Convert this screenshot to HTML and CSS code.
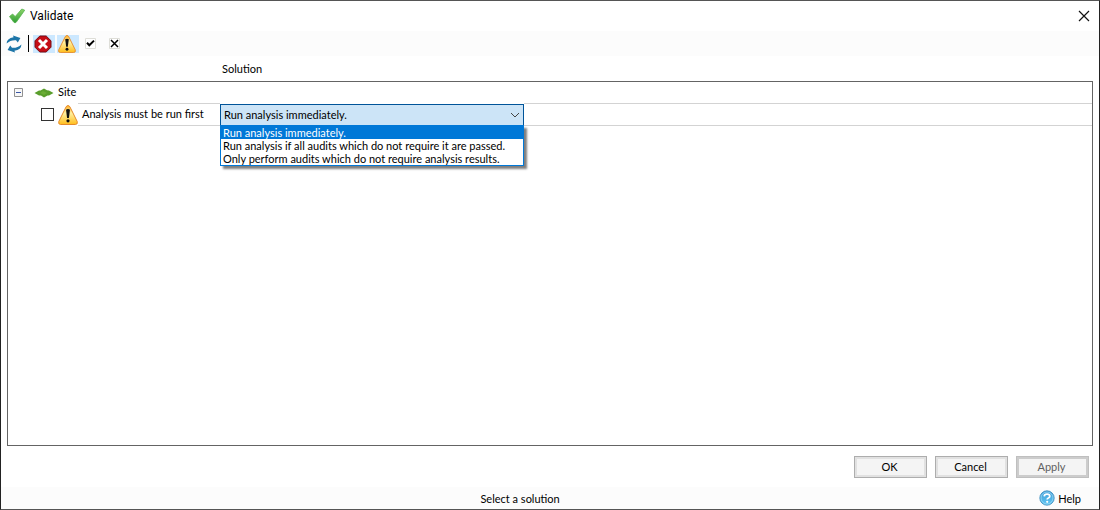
FILE: index.html
```html
<!DOCTYPE html>
<html lang="en">
<head>
<meta charset="utf-8">
<title>Validate</title>
<link rel="stylesheet" href="styles.css">
</head>
<body>
<svg class="defs" aria-hidden="true">
  <defs>
    <linearGradient id="amber" x1="0" y1="0" x2="0" y2="1"><stop offset="0" stop-color="#ffb52e"/><stop offset=".4" stop-color="#fff0a0"/><stop offset="1" stop-color="#ffbd1c"/></linearGradient>
    <linearGradient id="leaf" x1="0" y1="0" x2="0" y2="1"><stop offset="0" stop-color="#8ed46a"/><stop offset="1" stop-color="#2f9e35"/></linearGradient>
    <linearGradient id="sky" x1="0" y1="0" x2="0" y2="1"><stop offset="0" stop-color="#3f9bd6"/><stop offset="1" stop-color="#62c8f4"/></linearGradient>
    <symbol id="warning" viewBox="0 0 20 20">
      <path d="M10 .6 Q11.3 .6 12 2 L19.2 16.5 Q20 19.4 17.4 19.5 H2.6 Q0 19.4 .8 16.5 L8 2 Q8.7 .6 10 .6Z" fill="url(#amber)" stroke="#e58a2c" stroke-width="1"/>
      <path d="M8 4.8 Q10 3.4 12 4.8 L10.9 13 H9.1Z" fill="#111"/><circle cx="10" cy="15.8" r="1.6" fill="#111"/>
    </symbol>
  </defs>
</svg>
<div class="window">
  <header class="titlebar">
    <svg class="logo" viewBox="0 0 16 16"><path d="M.5 8.5 L3.6 6 L6.2 8.6 L12.8 1 L15.7 2.2 L7.4 14 Q6 15.8 4.6 14Z" fill="url(#leaf)" stroke="#58b450" stroke-width=".8"/></svg>
    <h1 class="title">Validate</h1>
    <button class="close" aria-label="Close"><svg viewBox="0 0 12 12"><path d="M1 1 L11 11 M11 1 L1 11" stroke="#111" stroke-width="1.2"/></svg></button>
  </header>
  <div class="toolbar" role="toolbar">
    <button class="refresh" aria-label="Refresh"><svg viewBox="0 0 18 18"><path d="M1.6 8.6 Q1.6 3.4 8.6 2.2 L8 .4 L15.4 3 L12.8 7.4 L11 5.2 Q5.4 4.8 1.6 8.6Z M16.4 9.4 Q16.4 14.6 9.4 15.8 L10 17.6 L2.6 15 L5.2 10.6 L7 12.8 Q12.6 13.2 16.4 9.4Z" fill="#1c75a8"/></svg></button>
    <span class="divider"></span>
    <button class="tool on" aria-label="Show errors" aria-pressed="true"><svg viewBox="0 0 18 18"><path d="M5.8 1 H12.2 L17 5.8 V12.2 L12.2 17 H5.8 L1 12.2 V5.8Z" fill="#c60d16" stroke="#780d10"/><path d="M5 5 L13 13 M13 5 L5 13" stroke="#fff" stroke-width="3"/></svg></button>
    <button class="tool on" aria-label="Show warnings" aria-pressed="true"><svg><use href="#warning"/></svg></button>
    <button class="tool small" aria-label="Check all"><svg viewBox="0 0 11 11"><path d="M.5 .5 H10.5 V10.5 H.5Z" fill="#fff" stroke="#deded8"/><path d="M2 4.7 L4.3 7.2 L9 2.6" fill="none" stroke="#000" stroke-width="2"/></svg></button>
    <button class="tool small" aria-label="Uncheck all"><svg viewBox="0 0 11 11"><path d="M.5 .5 H10.5 V10.5 H.5Z" fill="#fff" stroke="#deded8"/><path d="M2 2 L9 9 M9 2 L2 9" stroke="#000" stroke-width="1.5"/></svg></button>
  </div>
  <div class="columns"><span>Solution</span></div>
  <main class="tree">
    <div class="row group">
      <button class="toggle" aria-label="Collapse Site"><svg viewBox="0 0 9 9"><path d="M.5 .5 H8.5 V8.5 H.5Z" fill="#f7f7f7" stroke="#919191"/><path d="M2 4.5 H7" stroke="#3a57a6"/></svg></button>
      <svg class="site" viewBox="0 0 20 10"><path d="M.5 5 L5 2.4 L6.5 2.4 L10 .4 L13 2.2 L15 2.4 L19.5 5 L15 7.4 L13.5 7.4 L10 9.6 L7 7.6 L5 7.6Z" fill="#5a9e2c"/><path d="M6 5 L9 3 L13 5 L10 7Z" fill="#6bad36"/></svg>
      <span>Site</span>
    </div>
    <div class="row item">
      <input class="check" type="checkbox" id="analysis">
      <svg class="alert"><use href="#warning"/></svg>
      <label class="name" for="analysis">Analysis must be run first</label>
      <div class="combo">
        <select class="field" aria-label="Solution">
          <option>Run analysis immediately.</option>
          <option>Run analysis if all audits which do not require it are passed.</option>
          <option>Only perform audits which do not require analysis results.</option>
        </select>
        <svg class="arrow" viewBox="0 0 10 6"><path d="M1 1 L5 5 L9 1" fill="none" stroke="#444"/></svg>
        <ul class="menu" role="listbox" aria-label="Solution choices">
          <li class="choice current" role="option" aria-selected="true">Run analysis immediately.</li>
          <li class="choice" role="option">Run analysis if all audits which do not require it are passed.</li>
          <li class="choice" role="option">Only perform audits which do not require analysis results.</li>
        </ul>
      </div>
      <span class="rest"></span>
    </div>
  </main>
  <div class="actions">
    <button class="button">OK</button>
    <button class="button">Cancel</button>
    <button class="button" disabled>Apply</button>
  </div>
  <footer class="status">
    <span class="message">Select a solution</span>
    <a class="help" href="#help"><svg viewBox="0 0 16 16"><circle cx="8" cy="8" r="7.2" fill="url(#sky)" stroke="#3689bd" stroke-width=".8"/><circle cx="8" cy="8" r="6" fill="none" stroke="#a4dcf6" stroke-width=".7"/><path d="M5.2 6.4 Q5.4 4.2 8 4.2 Q10.8 4.2 10.8 6.2 Q10.8 7.4 9.4 8 Q8.2 8.5 8.2 9.6" fill="none" stroke="#fff" stroke-width="1.8"/><circle cx="8.2" cy="11.8" r="1.1" fill="#fff"/></svg>Help</a>
  </footer>
</div>
</body>
</html>
```

FILE: styles.css
```css
* { box-sizing: border-box; }
body { margin: 0; color: #000; font: 11px/13px Lato, "Liberation Sans", sans-serif; }
button { margin: 0; padding: 0; border: 0; background: none; color: inherit; font: inherit; }
svg { display: block; flex: none; }
.defs { position: absolute; width: 0; height: 0; }
.window { display: flex; flex-direction: column; min-height: 100vh; border: 1px solid #555; border-left-color: #222; border-right-color: #222; background: #fff; }

.titlebar { display: flex; align-items: center; height: 30px; padding: 0 7px 0 8px; }
.logo { width: 16px; height: 16px; }
.title { flex: 1; margin: 0 0 0 5px; font: 12px/16px Roboto, sans-serif; }
.close { display: grid; place-items: center; width: 16px; height: 16px; }
.close svg { width: 12px; height: 12px; }

.toolbar { display: flex; align-items: center; height: 25px; padding-left: 4px; background: #fcfcfc; }
.tool { display: grid; place-items: center; width: 22px; height: 18px; margin-right: 2px; padding-right: 2px; }
.toolbar svg { width: 18px; height: 18px; }
.tool.on { background: #cce8ff; }
.toolbar .small svg { width: 11px; height: 11px; }
.toolbar .small { padding-right: 3px; }
.refresh { margin-right: 5px; }
.divider { width: 1px; height: 17px; margin-right: 4px; background: #000; }

.columns { height: 25px; padding: 6px 0 0 221px; }
.tree { flex: 1; margin: 0 6px; border: 1px solid #646464; }
.row { display: flex; align-items: center; }
.group { height: 21px; padding-left: 6px; }
.group span { padding-bottom: 2px; }
.toggle { margin-right: 11px; }
.toggle svg { width: 9px; height: 9px; }
.site { width: 20px; height: 10px; margin-right: 4px; }
.item { height: 23px; padding-left: 33px; }
.check { appearance: none; flex: none; width: 13px; height: 13px; margin: 0 4px 0 0; border: 1px solid #333; background: #fff; }
.alert { width: 20px; height: 20px; }
.name, .rest { align-self: stretch; border: solid #d3d3d3; border-width: 1px 0; }
.name { width: 142px; padding: 3px 0 0 4px; white-space: nowrap; }
.rest { flex: 1; }

.combo { position: relative; align-self: flex-end; width: 304px; height: 22px; }
.field { appearance: none; display: block; width: 100%; height: 22px; padding: 0 20px 2px 3px; border: 1px solid #005499; border-radius: 0; background: #cce4f7; color: #000; font: inherit; }
.arrow { position: absolute; top: 8px; right: 4px; width: 10px; height: 6px; pointer-events: none; }
.menu { position: absolute; z-index: 1; top: 21px; left: 0; width: 100%; margin: 0; padding: 0; border: 1px solid #0078d7; background: #fff; box-shadow: 3px 3px 2px #00000080; list-style: none; }
.choice { padding: 0 2px; white-space: nowrap; }
.current { background: #0078d7; color: #fff; }

.actions { display: flex; justify-content: flex-end; gap: 8px; padding: 10px 10px 9px; }
.button { width: 73px; height: 22px; padding: 0 2px 2px 0; border: 1px solid #adadad; background: #f4f4f4; box-shadow: inset 0 0 0 2px #e1e1e1; }
.button:disabled { border-color: #bfbfbf; box-shadow: inset 0 0 0 2px #cccccc; color: #606060; }

.status { display: flex; align-items: center; height: 22px; padding-right: 18px; background: #fcfcfc; }
.message { flex: 1; text-align: center; }
.help { display: flex; align-items: center; gap: 3px; color: inherit; text-decoration: none; }
.help svg { width: 16px; height: 16px; }
```
